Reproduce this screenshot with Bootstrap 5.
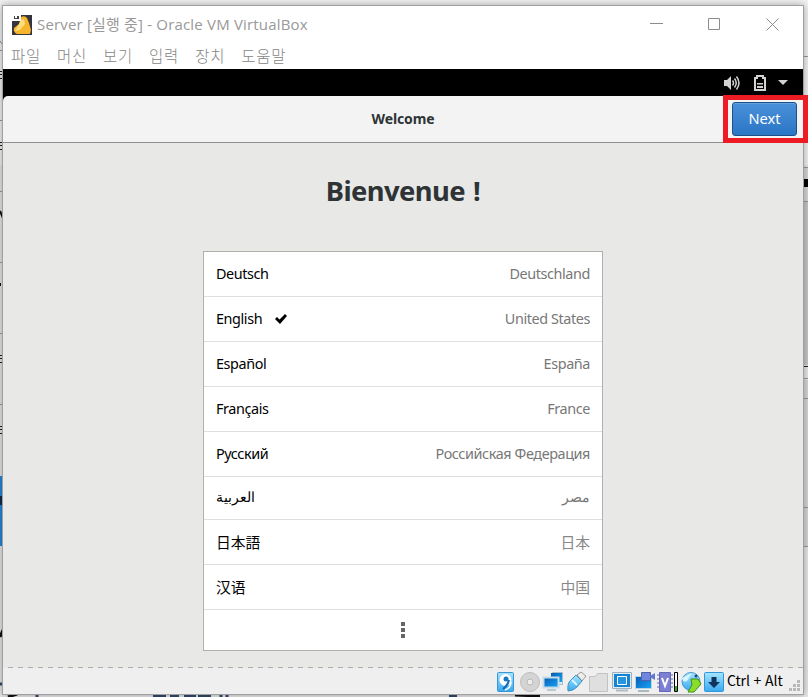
<!DOCTYPE html>
<html lang="ko">
<head>
<meta charset="utf-8">
<meta name="viewport" content="width=device-width, initial-scale=1">
<title>Server [실행 중] - Oracle VM VirtualBox</title>
<link href="https://cdn.jsdelivr.net/npm/bootstrap@5.3.0/dist/css/bootstrap.min.css" rel="stylesheet">
<style>
body{width:808px;height:697px;background:#e9e9e9;font-family:"Noto Sans","Noto Sans CJK KR",sans-serif;font-size:14.4px;line-height:1.4}
.backdrop{left:0;top:0;z-index:0}
.vm-window{margin:5px 0 0 2px;width:802px;height:690px;border:1px solid #a0a0a0;background:#e8e8e7;z-index:1;box-shadow:0 0 8px rgba(0,0,0,.35)}
.title-bar{height:37px;background:#fff;padding-left:9px}
.title-text{font-family:"Open Sans","Noto Sans CJK KR",sans-serif;font-weight:400;font-size:15px;margin-left:5px;color:#999;white-space:nowrap;letter-spacing:.18px}
.win-controls{margin-left:auto;padding-right:24px;gap:45px}
.menu-bar{height:26px;background:#fff;padding:0 0 1px 8px;gap:16px;font-family:"Noto Sans CJK KR",sans-serif;font-weight:300;font-size:15.5px;letter-spacing:.75px;color:#858585}
.menu-bar span{white-space:nowrap}
.guest-top{height:27px;background:#000;padding-right:15px}
.guest-head-wrap{background:#000}
.guest-head{height:47px;background:#f3f3f3;border-bottom:1px solid #8f8f8f;border-radius:5px 0 0 0;color:#2e3436}
.head-title{font-weight:700;font-size:14px;letter-spacing:-.12px;padding-bottom:1px}
.next-mark{right:-5px;top:-1px;width:85px;height:48px;border:5px solid #ed1c24;z-index:3}
.btn-next{width:65px;height:34px;margin-left:4px;margin-top:2px;padding:0;border:1px solid #1c5187;border-radius:3px;background:linear-gradient(#4a90d9,#2a76c6);color:#fff;font-size:14.6px;box-shadow:inset 0 1px #64a2df;display:block}
.btn-next:hover{color:#fff;background:linear-gradient(#5298df,#317dcd)}
.guest-body{height:524px}
.welcome{font-weight:700;font-size:27.4px;line-height:36px;margin:30px 0 42px;color:#2e3436;text-align:center;letter-spacing:-.6px;word-spacing:1.5px}
.lang-list{width:400px;height:400px;margin-left:200px;border:1px solid #b0b0ae;border-radius:0}
.lang-list .list-group-item{height:45px;border:0;border-bottom:1px solid #dfdfdf;border-radius:0;padding:0 12px;color:#000;letter-spacing:-.4px;background:#fff}
.lang-list .list-group-item.rtl-row{height:43px;letter-spacing:0;font-size:14.4px;padding-bottom:1px}
.lang-list .list-group-item.more-row{height:40px;border-bottom:0}
.region{color:#777}
.lang-list .cjk{font-family:"Noto Sans CJK SC",sans-serif;font-size:14.8px;letter-spacing:0}
.cjk .region{color:#888}
.lang-list .jp{font-family:"Noto Sans CJK JP",sans-serif}
.status-bar{height:26px;background:#efefef;padding-left:494px}
.host-key{font-family:"Noto Sans CJK KR",sans-serif;font-size:14px;color:#000;margin-left:6px;letter-spacing:-.1px;white-space:nowrap}
.grip{margin-left:auto;margin-top:9px;margin-right:3px}
svg{flex:none;display:block}
</style>
<script src="https://cdn.jsdelivr.net/npm/bootstrap@5.3.0/dist/js/bootstrap.bundle.min.js"></script>
</head>
<body class="position-relative overflow-hidden m-0">
<svg class="backdrop position-absolute" width="808" height="697" viewBox="0 0 808 697" aria-hidden="true">
  <path fill="#f3f3f3" d="M0 0h808v165H0z"/>
  <path fill="#d9d9d9" d="M803 167h5v34h-5z"/><path fill="#c9c9c9" d="M803 202h5v163h-5z"/><path fill="#bababa" d="M803 380h5v166h-5z" opacity=".35"/>
  <path fill="#000" d="M803 179h5v8h-5z"/>
  <path stroke="#999" d="M803 56.500h5M803 122.500h5M803 167.500h5M803 201.500h5M803 398.500h5M803 507.500h5M803 546.500h5M803 378.500h5M0 50.500h3M0 120.500h3M0 191.500h3M0 262.500h3M0 333.500h3M0 404.500h3"/>
  <path stroke="#222" d="M803 366.500h5M0 71.500h3M0 74.500h3M0 78.500h3M0 142.500h3M0 145.500h3M0 149.500h3M0 355.500h3M0 358.500h3M0 362.500h3M0 426.500h3M0 429.500h3M0 433.500h3"/>
  <path d="M0 211l3 7M0 283v3" stroke="#111" stroke-width="2"/><path d="M0 41l3 4" stroke="#888"/>
  <path fill="#2788dd" d="M0 476h3v70H0z"/><path fill="#102c50" d="M0 496h2v9H0z"/>
  <path stroke="#111" stroke-width="3" d="M0 637l3-7M8 697l9-3M515 695l25 1"/>
  <path stroke="#33496f" stroke-width="3" d="M0 684h3M37 695v2M153 696h13M170 696h9M184 696h12M198 696h13M221 695v2M227 695v2M449 695.500h8"/>
</svg>

<main class="vm-window position-relative d-flex flex-column">
  <header class="title-bar d-flex align-items-center">
    <svg width="20" height="20" viewBox="0 0 20 20"><path fill="#353540" d="M0 0h20v20H0z"/><path fill="#f7b52c" d="M9 2q4-2 6 1l2 5 2 7-1 4H5q-4-2-3-6l5-4z"/><path fill="#ffdc7b" d="M9 5l3-1 1 5-5 6-5 1 3-5z"/><path fill="#fff" d="M0 0h9v6H0z"/><path fill="#444" d="M2 1h1v2H2zm3 0h2v2H5zM2 3h5v1H2z"/></svg>
    <span class="title-text">Server [실행 중] - Oracle VM VirtualBox</span>
    <div class="win-controls d-flex">
      <svg width="13" height="13" fill="none" stroke="#8c8c8c"><path d="M0 5.500h13"/></svg>
      <svg width="13" height="13" fill="none" stroke="#8c8c8c"><path d="M.5.500h11v11H.5z"/></svg>
      <svg width="13" height="13" fill="none" stroke="#8c8c8c"><path d="M.5.500l12 12M12.500.500l-12 12"/></svg>
    </div>
  </header>
  <nav class="menu-bar d-flex align-items-center"><span>파일</span><span>머신</span><span>보기</span><span>입력</span><span>장치</span><span>도움말</span></nav>

  <div class="guest-top d-flex align-items-center justify-content-end">
    <svg width="16" height="16" viewBox="0 0 16 16" fill="none" stroke="#d2d2d2"><path fill="#d2d2d2" stroke="none" d="M0 5h3l4-4v14l-4-4H0z"/><path stroke-width="1.500" d="M8.500 5.500q2 2.500 0 5M10.500 3.500q3.500 4.500 0 9M12.500 1.500q5 6.500 0 13"/></svg>
    <svg width="12" height="16" viewBox="0 0 12 16" style="margin:0 12px 0 14px"><path fill="none" stroke="#d2d2d2" stroke-width="2" d="M1 3h2V1h6v2h2v12H1z"/><path fill="#d2d2d2" d="M3 8h6v1.500H3zM3 11h6v2H3z"/></svg>
    <svg width="10" height="5" viewBox="0 0 10 5"><path fill="#d2d2d2" d="M0 0h10L5 5z"/></svg>
  </div>
  <div class="guest-head-wrap">
    <div class="guest-head position-relative d-flex align-items-center justify-content-center">
      <span class="head-title">Welcome</span>
      <div class="next-mark position-absolute"><button type="button" class="btn btn-next">Next</button></div>
    </div>
  </div>

  <section class="guest-body">
    <h1 class="welcome">Bienvenue !</h1>
    <div class="list-group lang-list">
      <div class="list-group-item d-flex justify-content-between align-items-center"><span>Deutsch</span><span class="region">Deutschland</span></div>
      <div class="list-group-item d-flex justify-content-between align-items-center"><span class="d-flex align-items-center">English<svg width="12" height="10" viewBox="0 0 12 10" style="margin-left:13px"><path fill="#000" d="M0 5l2-2 2.500 2.500L10 0l2 2-7 8z"/></svg></span><span class="region">United States</span></div>
      <div class="list-group-item d-flex justify-content-between align-items-center"><span>Español</span><span class="region">España</span></div>
      <div class="list-group-item d-flex justify-content-between align-items-center"><span>Français</span><span class="region">France</span></div>
      <div class="list-group-item d-flex justify-content-between align-items-center"><span>Русский</span><span class="region">Российская Федерация</span></div>
      <div class="list-group-item rtl-row d-flex justify-content-between align-items-center"><span lang="ar">العربية</span><span class="region" lang="ar">مصر</span></div>
      <div class="list-group-item cjk jp d-flex justify-content-between align-items-center"><span lang="ja">日本語</span><span class="region">日本</span></div>
      <div class="list-group-item cjk d-flex justify-content-between align-items-center"><span lang="zh">汉语</span><span class="region">中国</span></div>
      <div class="list-group-item more-row d-flex justify-content-center align-items-center"><svg width="4" height="16" fill="#666"><path d="M0 0h4v4H0zM0 6h4v4H0zM0 12h4v4H0z"/></svg></div>
    </div>
  </section>

  <svg width="800" height="1"><path stroke="#ababab" stroke-dasharray="5 5" d="M5 .5h795"/></svg>
  <footer class="status-bar d-flex align-items-center">
    <svg width="232" height="26" viewBox="497 668 232 26" style="margin-right:-8px">
      <defs><linearGradient id="blue" x2="0" y2="1"><stop stop-color="#a6e4ff"/><stop offset="1" stop-color="#39a9ef"/></linearGradient><linearGradient id="screen" x2="1" y2="1"><stop stop-color="#085bb5"/><stop offset="1" stop-color="#16a4f5"/></linearGradient></defs>
      <rect x="497.500" y="672.500" width="16" height="19" rx="1" fill="url(#blue)" stroke="#3b95d5"/><circle cx="505.500" cy="680" r="6" fill="#fff"/><circle cx="506" cy="679" r="2.500" fill="#1678c5"/><path d="M509 680q-1 5-6 9" fill="none" stroke="#1267b1" stroke-width="2"/><path d="M511 682q0 6-6 8" fill="none" stroke="#fff" stroke-width="1.500"/>
      <circle cx="530" cy="682" r="9.500" fill="#d4d4d4" stroke="#bdbdbd"/><circle cx="530" cy="682" r="3" fill="#eee" stroke="#b8b8b8"/>
      <path d="M552.500 672.500h10v12h-10z" fill="#d7edf8" stroke="#a9bbc5"/><path d="M551 673h11v9h-11z" fill="url(#screen)"/><path d="M543.500 677.500h15v10h-15z" fill="url(#screen)" stroke="#c3dce8" stroke-width="2"/><path d="M547 690h9" stroke="#bcc8ce" stroke-width="2"/>
      <path d="M577 675l4-3 5 4-4 5z" fill="#eee" stroke="#999"/><path d="M568 691q-1-8 3-11l5-5 6 6-5 6q-4 4-9 4z" fill="url(#blue)" stroke="#4191b9"/><path d="M572 680l5 5" stroke="#d9faff" stroke-width="2"/>
      <path d="M589.500 691.500v-15h6l2-3h10v18z" fill="#dfdfdf" stroke="#c2c2c2"/>
      <path d="M612.500 672.500h19v16h-19z" fill="#dcecf3" stroke="#9eb1bc"/><path d="M614 674h16v13h-16z" fill="#1584d5"/><path d="M617.500 676.500h9v8h-9z" fill="#2595df" stroke="#fff"/><path d="M616 690.500h12" stroke="#aebbc1" stroke-width="2"/>
      <path d="M635.500 676.500h16v12h-16z" fill="url(#screen)" stroke="#b9d5e2"/><path d="M638 691h11" stroke="#abb9bf" stroke-width="2"/><path d="M641.500 672.500h9v8h-9z" fill="#7187de" stroke="#5361a7"/><path d="M650 676l5-3v7l-5-3z" fill="#6379d0"/>
      <path d="M659.500 672.500h11v19h-11z" fill="#7d80d2" stroke="#6267b7"/><path d="M657 675h3M657 679h3M657 683h3M657 687h3M670 675h3M670 679h3M670 683h3M670 687h3" stroke="#6267b7"/><path d="M662 678l3 8 3-8" fill="none" stroke="#fff" stroke-width="2"/>
      <path d="M674.500 672.500h3v19h-3z" fill="#fff" stroke="#000"/><path d="M675 686h2v5h-2z" fill="#36aa24"/>
      <circle cx="691" cy="681.500" r="9" fill="url(#blue)" stroke="#4598c9"/><path d="M692 673l-5 8q-4 2-5-3z" fill="#d7f7ff"/><path d="M691 679h7l3 5-7 8h-6l4-7z" fill="#8ade2a" stroke="#438d18"/><circle cx="696" cy="676" r="1.500" fill="#145080"/>
      <rect x="704.500" y="672.500" width="19" height="19" rx="1" fill="url(#blue)" stroke="#3297da"/><path d="M711.500 677h5v5h3.500l-6 6-6-6h3.500z" fill="#10345c"/>
    </svg>
    <span class="host-key">Ctrl + Alt</span>
    <svg class="grip" width="11" height="11" fill="#b8b8b8"><path d="M8 0h3v3H8zM4 4h3v3H4zM8 4h3v3H8zM0 8h3v3H0zM4 8h3v3H4zM8 8h3v3H8z"/></svg>
  </footer>
</main>
</body>
</html>
